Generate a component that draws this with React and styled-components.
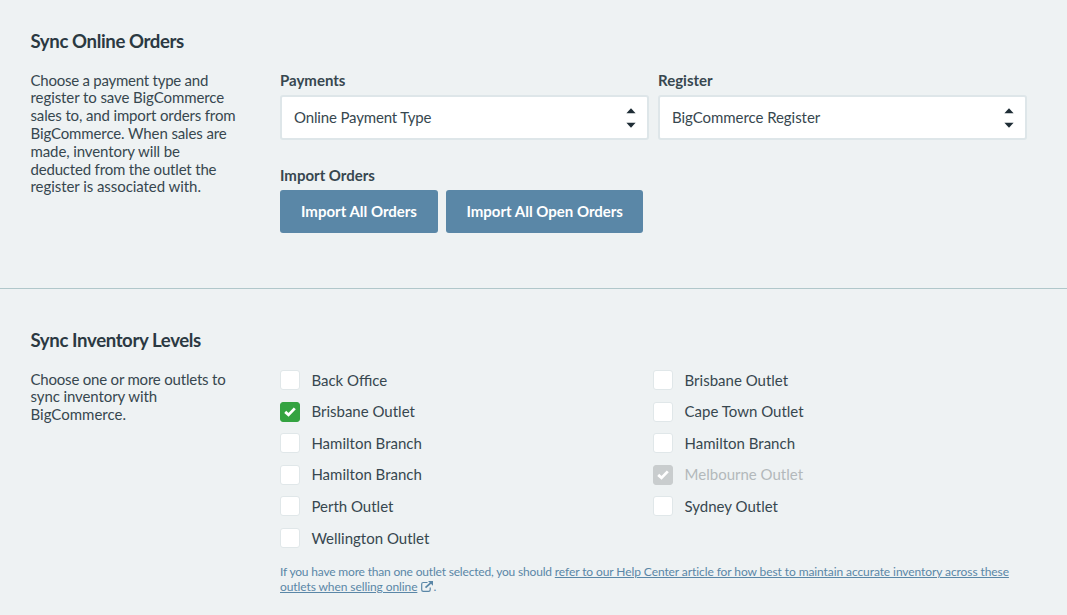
import React from 'react';
import styled, { createGlobalStyle } from 'styled-components';

const GlobalStyle = createGlobalStyle`
  * { box-sizing: border-box; }
  body {
    margin: 0;
    background: #eef2f3;
    color: #37474f;
    font-family: Lato, 'Liberation Sans', sans-serif;
    font-size: 15px;
    line-height: 17.83px;
    -webkit-font-smoothing: antialiased;
  }
`;

const Page = styled.main`
  width: 1067px;
  height: 615px;
  overflow: hidden;
`;

const Section = styled.section`
  display: grid;
  grid-template-columns: 208px 747px;
  column-gap: 41.5px;
  grid-template-rows: 24px auto;
  row-gap: 18.5px;
  padding: ${(p) => p.$top}px 40px 0 30.5px;
  height: ${(p) => p.$height}px;
  border-bottom: ${(p) => (p.$divided ? '1px solid #b0c7ca' : 'none')};
`;

const Heading = styled.h2`
  grid-column: 1 / -1;
  margin: 0;
  font-size: 18.6px;
  font-weight: 700;
  line-height: 24px;
  letter-spacing: -0.38px;
  color: #2b3942;
`;

const Description = styled.p`
  margin: 0;
`;

const Line = styled.span`
  display: block;
  white-space: nowrap;
  letter-spacing: ${(p) => p.$track || 0}px;
`;

const Content = styled.div`
  display: flex;
  flex-direction: column;
`;

const Fields = styled.div`
  display: grid;
  grid-template-columns: 1fr 1fr;
  column-gap: 9px;
  margin-bottom: 27px;
`;

const Label = styled.div`
  font-weight: 700;
  height: 18px;
  margin-bottom: 5px;
`;

const Select = styled.div`
  display: flex;
  align-items: center;
  justify-content: space-between;
  height: 45px;
  padding: 1px 11px 0 12px;
  background: #fff;
  border: 2px solid #dee6e9;
  border-radius: 3px;
  line-height: 19px;
  letter-spacing: ${(p) => p.$track}px;
`;

const Buttons = styled.div`
  display: flex;
  gap: 8px;
`;

const Button = styled.button`
  width: ${(p) => p.$width}px;
  height: 43px;
  padding: 0;
  border: 0;
  border-radius: 3px;
  background: #5a87a7;
  color: #fff;
  font: 700 15px/18px Lato, sans-serif;
`;

const Outlets = styled.div`
  display: grid;
  grid-template-columns: 373.2px 1fr;
  grid-template-rows: repeat(6, 31.6px);
  grid-auto-flow: column;
  margin-top: -6.2px;
`;

const Outlet = styled.div`
  display: flex;
  align-items: center;
  gap: 11.4px;
  line-height: 19px;
  color: ${(p) => (p.$disabled ? '#b3b9bb' : 'inherit')};
`;

const Box = styled.span`
  display: flex;
  align-items: center;
  justify-content: center;
  width: 20px;
  height: 20px;
  border-radius: 3px;
  border: 1px solid ${(p) => p.$edge};
  background: ${(p) => p.$fill};
`;

const Note = styled.p`
  margin: 10.2px 0 0;
  font-size: 12px;
  line-height: 15px;
  letter-spacing: -0.18px;
  color: #5a87a7;
`;

const Link = styled.a`
  text-decoration: underline;
  letter-spacing: -0.09px;
`;

const ExternalIcon = styled.svg`
  margin-left: 4px;
  vertical-align: -1px;
`;

const Arrows = () => (
  <svg width="10" height="20" viewBox="0 0 10 20" fill="#1f2d36">
    <path d="M0.4 5.2 5 0.2 9.6 5.2Z" />
    <path d="M0.4 14.8 5 19.8 9.6 14.8Z" />
  </svg>
);

const Check = () => (
  <svg width="12" height="10" viewBox="0 0 12 10" fill="none">
    <path d="M1.2 4.9 4.5 7.9 10.8 1.4" stroke="#fff" strokeWidth="2.8" />
  </svg>
);

const outlets = [
  { name: 'Back Office' },
  { name: 'Brisbane Outlet', checked: true },
  { name: 'Hamilton Branch' },
  { name: 'Hamilton Branch' },
  { name: 'Perth Outlet' },
  { name: 'Wellington Outlet' },
  { name: 'Brisbane Outlet' },
  { name: 'Cape Town Outlet' },
  { name: 'Hamilton Branch' },
  { name: 'Melbourne Outlet', checked: true, disabled: true },
  { name: 'Sydney Outlet' },
];

function OutletOption({ name, checked, disabled }) {
  const fill = disabled ? '#c9cdce' : checked ? '#34a341' : '#fff';
  return (
    <Outlet $disabled={disabled}>
      <Box $fill={fill} $edge={checked ? fill : '#e0e7e9'}>{checked && <Check />}</Box>
      {name}
    </Outlet>
  );
}

export default function App() {
  return (
    <Page>
      <GlobalStyle />
      <Section $height={289} $top={29} $divided>
        <Heading>Sync Online Orders</Heading>
        <Description>
          <Line $track={-0.24}>Choose a payment type and</Line>
          <Line $track={-0.08}>register to save BigCommerce</Line>
          <Line $track={-0.14}>sales to, and import orders from</Line>
          <Line $track={-0.12}>BigCommerce. When sales are</Line>
          <Line $track={-0.1}>made, inventory will be</Line>
          <Line $track={-0.18}>deducted from the outlet the</Line>
          <Line $track={-0.06}>register is associated with.</Line>
        </Description>
        <Content>
          <Fields>
            <div>
              <Label>Payments</Label>
              <Select $track={-0.15}>Online Payment Type<Arrows /></Select>
            </div>
            <div>
              <Label>Register</Label>
              <Select $track={-0.05}>BigCommerce Register<Arrows /></Select>
            </div>
          </Fields>
          <Label>Import Orders</Label>
          <Buttons>
            <Button $width={158}>Import All Orders</Button>
            <Button $width={197.4}>Import All Open Orders</Button>
          </Buttons>
        </Content>
      </Section>
      <Section $height={326} $top={39}>
        <Heading>Sync Inventory Levels</Heading>
        <Description>
          <Line $track={-0.2}>Choose one or more outlets to</Line>
          <Line $track={-0.1}>sync inventory with</Line>
          <Line>BigCommerce.</Line>
        </Description>
        <Content>
          <Outlets>
            {outlets.map((outlet, i) => <OutletOption key={i} {...outlet} />)}
          </Outlets>
          <Note>
            If you have more than one outlet selected, you should{' '}
            <Link>refer to our Help Center article for how best to maintain accurate inventory across these<br />outlets when selling online</Link>
            <ExternalIcon width="12" height="11" viewBox="0 0 12 11" fill="none" stroke="#5a87a7">
              <path d="M6.5 1.5H2.3Q.7 1.5.7 3.1V8.7Q.7 10.3 2.3 10.3H7.6Q9.2 10.3 9.2 8.7V6.4" strokeWidth="1.2" />
              <path d="M4.5 6.6 9.8 1.8" strokeWidth="1.8" />
              <path d="M7 0H12V4.8Z" fill="#5a87a7" stroke="none" />
            </ExternalIcon>
            .
          </Note>
        </Content>
      </Section>
    </Page>
  );
}
